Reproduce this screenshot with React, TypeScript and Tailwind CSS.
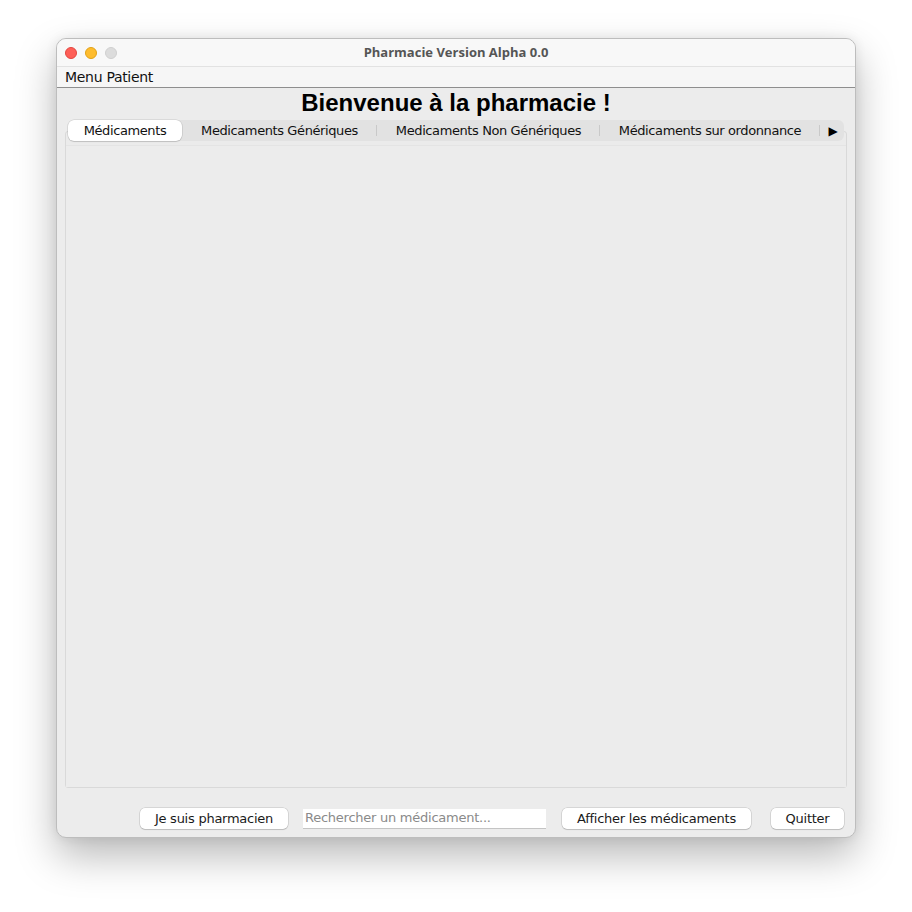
import React from "react";

const sys = { fontFamily: '"DejaVu Sans", "Noto Sans", sans-serif' };

function Btn({ children, w }: { children: React.ReactNode; w: string }) {
  return (
    <div
      className={`${w} h-[21px] bg-white rounded-[5px] shadow-[0_0_0_0.5px_rgba(0,0,0,0.18),0_1px_1px_rgba(0,0,0,0.12)] flex items-center justify-center text-[13px] tracking-[-0.25px] text-[#1a1a1a]`}
      style={sys}
    >
      {children}
    </div>
  );
}

export default function App() {
  const tabs = [
    { label: "Medicaments Génériques", w: "w-[195px]" },
    { label: "Medicaments Non Génériques", w: "w-[223px]" },
    { label: "Médicaments sur ordonnance", w: "w-[220px]" },
  ];
  return (
    <div className="w-[912px] h-[912px] bg-white pt-[38px] pl-[56px]">
      <div className="w-[800px] h-[800px] rounded-[10px] border border-[#bdbdbd] shadow-[0_18px_40px_rgba(0,0,0,0.28),0_0_12px_rgba(0,0,0,0.08)] overflow-hidden flex flex-col bg-[#ececec]">
        {/* Title bar */}
        <div className="h-[28px] bg-[#f8f8f8] border-b border-[#e2e2e2] flex items-center relative shrink-0">
          <div className="flex gap-[8px] pl-[8px]">
            <div className="w-[12px] h-[12px] rounded-full bg-[#fe5f57] border border-[#e2463f]" />
            <div className="w-[12px] h-[12px] rounded-full bg-[#febc2e] border border-[#e1a116]" />
            <div className="w-[12px] h-[12px] rounded-full bg-[#dcdcdc] border border-[#cfcfcf]" />
          </div>
          <div
            className="absolute inset-0 flex items-center justify-center text-[13px] font-bold text-[#555]"
            style={{ fontFamily: '"Open Sans", "Noto Sans", sans-serif' }}
          >
            Pharmacie Version Alpha 0.0
          </div>
        </div>
        {/* Menu bar */}
        <div className="h-[21px] bg-[#f6f6f6] border-b border-[#8e8e8e] flex items-center pl-[8px] text-[14px] tracking-[-0.3px] text-[#111] shrink-0" style={sys}>
          Menu Patient
        </div>
        {/* Heading */}
        <div
          className="h-[29px] flex items-end justify-center text-[24px] font-bold text-black leading-[28px] shrink-0"
          style={{ fontFamily: '"Liberation Sans", Arial, sans-serif' }}
        >
          Bienvenue à la pharmacie !
        </div>
        {/* Tabs + panel */}
        <div className="flex-1 flex flex-col px-[8px] pt-[3px] relative">
          <div className="relative flex-1 flex flex-col">
            <div className="absolute left-0 right-0 top-[11px] bottom-[0px] border border-[#d9d9d9] rounded-[3px] bg-[#ebebeb]">
              <div className="mt-[13px] h-[calc(100%-13px)] bg-[#ececec] border-t border-[#e4e4e4]" />
            </div>
            <div className="relative mx-[3px] h-[21px] rounded-[6px] bg-[#e2e2e2] flex items-center text-[13px] tracking-[-0.4px] text-[#111]" style={sys}>
              <div className="w-[114px] h-[21px] bg-white rounded-[6px] shadow-[0_0_0_0.5px_rgba(0,0,0,0.15),0_1px_1px_rgba(0,0,0,0.12)] flex items-center justify-center">
                Médicaments
              </div>
              {tabs.map((t) => (
                <div key={t.label} className={`${t.w} h-[21px] flex items-center justify-center relative`}>
                  {t.label}
                  <div className="absolute right-0 top-[5px] h-[11px] w-px bg-[#c9c9c9]" />
                </div>
              ))}
              <div className="flex-1 flex items-center justify-center text-[12px] text-black pl-[2px]">▶</div>
            </div>
          </div>
          <div className="h-[49px] shrink-0 flex items-start pt-[20px]">
            <div className="pl-[75px] flex items-center">
              <Btn w="w-[148px]">Je suis pharmacien</Btn>
              <div
                className="ml-[15px] w-[243px] h-[20px] bg-white border-b border-[#c4c4c4] flex items-center pl-[2px] text-[13px] tracking-[-0.25px] text-[#8a8a8a]"
                style={sys}
              >
                Rechercher un médicament...
              </div>
              <div className="ml-[16px]">
                <Btn w="w-[189px]">Afficher les médicaments</Btn>
              </div>
              <div className="ml-[20px]">
                <Btn w="w-[73px]">Quitter</Btn>
              </div>
            </div>
          </div>
        </div>
      </div>
    </div>
  );
}
